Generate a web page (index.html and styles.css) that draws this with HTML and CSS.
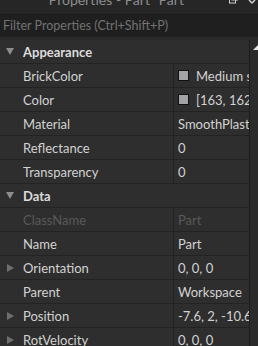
FILE: index.html
```html
<!DOCTYPE html>
<html>
<head>
  <title>Properties</title>
  <link rel="stylesheet" href="styles.css">
</head>
<body>
  <div class="titlebar">
    <span class="title">Properties - Part "Part"</span>
    <span class="tb-icons">
      <svg width="9" height="6" viewBox="0 0 9 6"><rect x="0.5" y="-3" width="6" height="6" fill="none" stroke="#d0d0d0"/><rect x="3" y="-5" width="5.5" height="5" fill="none" stroke="#d0d0d0"/></svg>
      <svg width="8" height="5" viewBox="0 0 8 5"><path d="M1 0 L4 3 L7 0" stroke="#d0d0d0" stroke-width="1.5" fill="none"/></svg>
    </span>
  </div>
  <div class="filter">Filter Properties (Ctrl+Shift+P)</div>
  <div class="gap"></div>
  <div class="panel">
    <div class="grid">
      <div class="group"><span class="tri down"></span>Appearance</div>
      <div class="row"><div class="name">BrickColor</div><div class="val"><span class="swatch"></span>Medium stone grey</div></div>
      <div class="row"><div class="name">Color</div><div class="val"><span class="swatch"></span>[163, 162, 165]</div></div>
      <div class="row"><div class="name">Material</div><div class="val">SmoothPlastic</div></div>
      <div class="row"><div class="name">Reflectance</div><div class="val">0</div></div>
      <div class="row"><div class="name">Transparency</div><div class="val">0</div></div>
      <div class="group"><span class="tri down"></span>Data</div>
      <div class="row off"><div class="name">ClassName</div><div class="val">Part</div></div>
      <div class="row"><div class="name">Name</div><div class="val">Part</div></div>
      <div class="row"><div class="name"><span class="tri right"></span>Orientation</div><div class="val">0, 0, 0</div></div>
      <div class="row"><div class="name">Parent</div><div class="val">Workspace</div></div>
      <div class="row"><div class="name"><span class="tri right"></span>Position</div><div class="val">-7.6, 2, -10.6</div></div>
      <div class="row"><div class="name"><span class="tri right"></span>RotVelocity</div><div class="val">0, 0, 0</div></div>
    </div>
    <div class="scroll"><span class="up"></span></div>
  </div>
</body>
</html>
```

FILE: styles.css
```css
body {
  margin: 0;
  width: 258px;
  height: 346px;
  overflow: hidden;
  background-color: #2e2e2e;
  font-family: Lato, "Open Sans", sans-serif;
  font-size: 13px;
  color: #d2d2d2;
}

.titlebar {
  height: 14px;
  background-color: #262626;
  position: relative;
  overflow: hidden;
}
.title {
  display: block;
  text-align: center;
  margin-top: -9px;
  color: #8e8e8e;
  font-size: 14px;
  padding-right: 20px;
  white-space: nowrap;
}
.tb-icons {
  position: absolute;
  right: 2px;
  top: 0;
  display: flex;
  gap: 10px;
}

.filter {
  height: 22px;
  line-height: 22px;
  padding-left: 3px;
  background-color: #1f1f1f;
  color: #727272;
  font-size: 12.5px;
  border-top: 1px solid #1a1a1a;
  white-space: nowrap;
}
.gap {
  height: 3px;
  background-color: #2a2a2a;
}

.panel {
  display: flex;
}
.grid {
  flex: 1;
  min-width: 0;
  overflow: hidden;
}
.scroll {
  width: 8px;
  background-color: #2b2b2b;
  border-left: 1px solid #1c1c1c;
  position: relative;
}
.up {
  position: absolute;
  right: 0;
  top: 5px;
  border-left: 5px solid transparent;
  border-bottom: 5px solid #e6e6e6;
}

.group, .row {
  height: 23px;
  border-bottom: 1px solid #232323;
  display: flex;
  align-items: center;
  white-space: nowrap;
}
.group {
  font-weight: bold;
  color: #dcdcdc;
  padding-left: 6px;
}
.group .tri {
  margin-right: 9px;
}
.name {
  width: 150px;
  flex-shrink: 0;
  padding-left: 23px;
  position: relative;
  height: 100%;
  display: flex;
  align-items: center;
  border-right: 1px solid #232323;
}
.val {
  flex: 1;
  min-width: 0;
  padding-left: 4px;
  overflow: hidden;
  display: flex;
  align-items: center;
}
.off .name, .off .val {
  color: #595959;
}
.swatch {
  width: 9px;
  height: 9px;
  background-color: #a3a2a5;
  border: 1px solid #111;
  margin-right: 7px;
  flex-shrink: 0;
}

.tri {
  display: inline-block;
  width: 0;
  height: 0;
}
.tri.down {
  border-left: 4.5px solid transparent;
  border-right: 4.5px solid transparent;
  border-top: 7px solid #8c8c8c;
}
.tri.right {
  position: absolute;
  left: 7px;
  border-top: 4.5px solid transparent;
  border-bottom: 4.5px solid transparent;
  border-left: 7px solid #6e6e6e;
}
```
